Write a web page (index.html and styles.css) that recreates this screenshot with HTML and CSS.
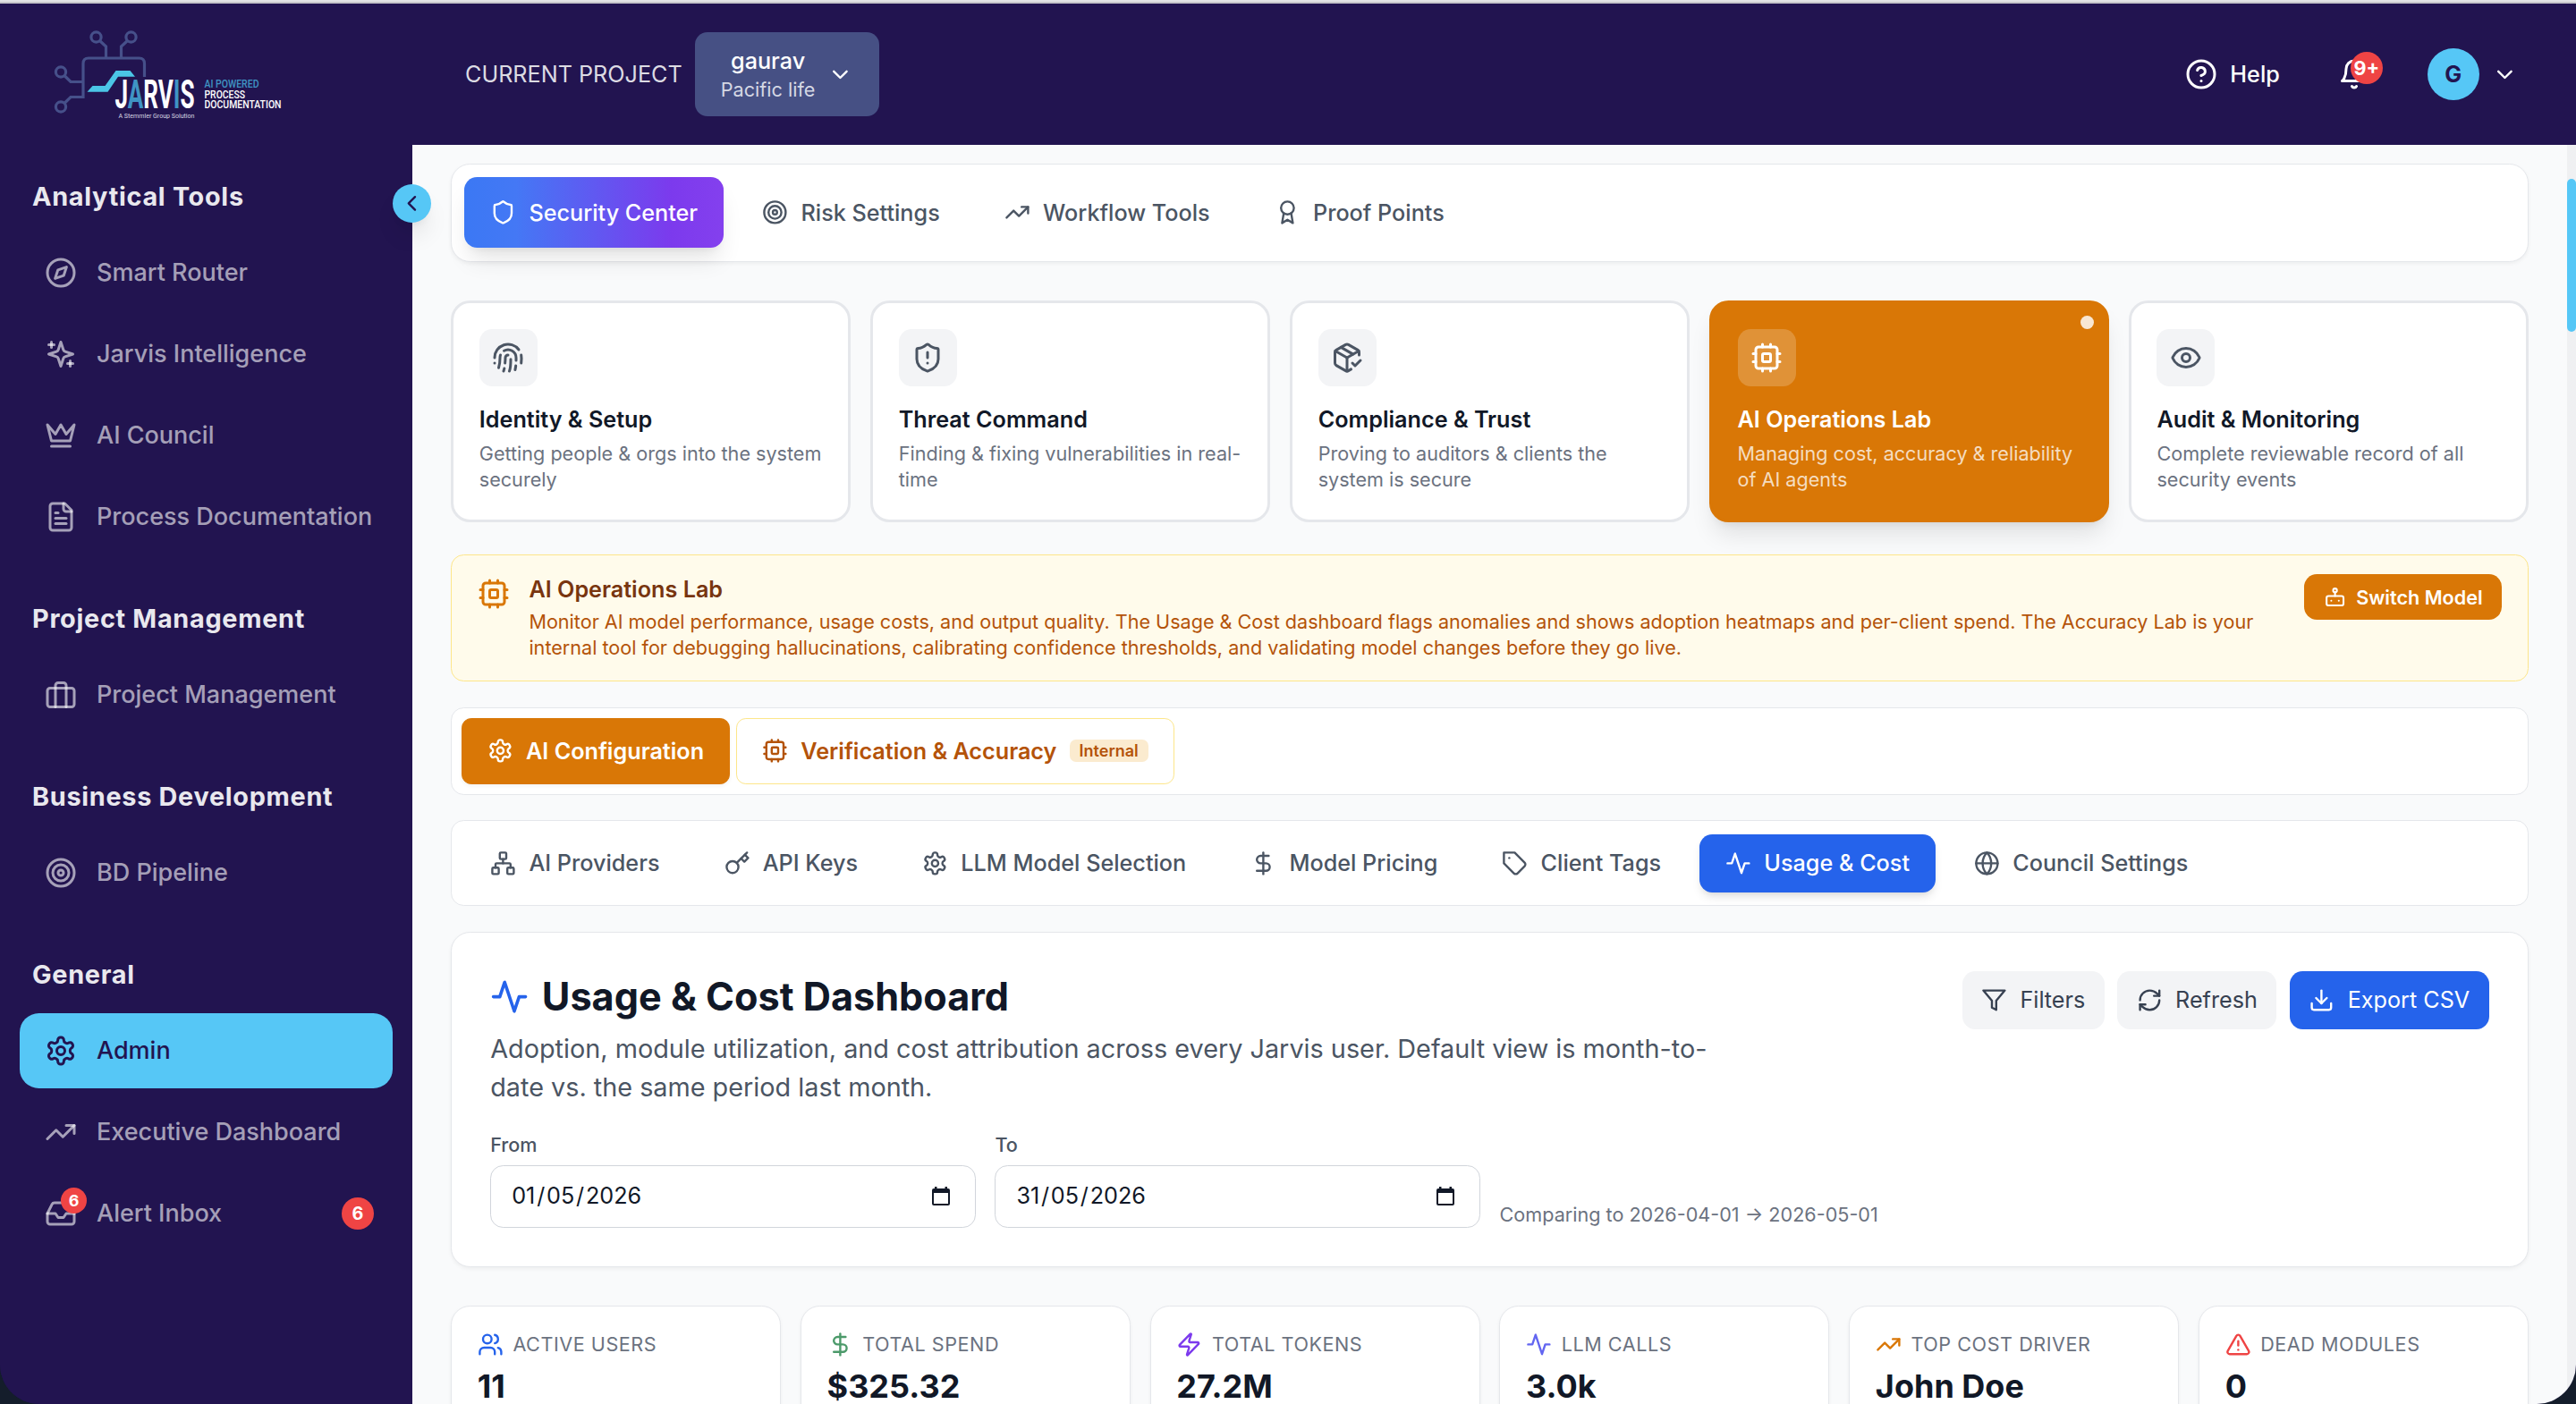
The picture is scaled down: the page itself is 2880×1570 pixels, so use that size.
FILE: index.html
```html
<!DOCTYPE html>
<html lang="en">
<head>
<meta charset="utf-8">
<title>Jarvis – Usage &amp; Cost Dashboard</title>
<link rel="stylesheet" href="styles.css">
</head>
<body>
<svg class="sprite" aria-hidden="true">
  <symbol id="compass" viewBox="0 0 24 24"><circle cx="12" cy="12" r="10"/><path d="M16.24 7.76 14.12 14.12 7.76 16.24 9.88 9.88z"/></symbol>
  <symbol id="sparkles" viewBox="0 0 24 24"><path d="m12 3-1.912 5.813a2 2 0 0 1-1.275 1.275L3 12l5.813 1.912a2 2 0 0 1 1.275 1.275L12 21l1.912-5.813a2 2 0 0 1 1.275-1.275L21 12l-5.813-1.912a2 2 0 0 1-1.275-1.275L12 3Z"/><path d="M5 3v4"/><path d="M19 17v4"/><path d="M3 5h4"/><path d="M17 19h4"/></symbol>
  <symbol id="crown" viewBox="0 0 24 24"><path d="m2 4 3 12h14l3-12-6 7-4-7-4 7-6-7zm3 16h14"/></symbol>
  <symbol id="file" viewBox="0 0 24 24"><path d="M15 2H6a2 2 0 0 0-2 2v16a2 2 0 0 0 2 2h12a2 2 0 0 0 2-2V7Z"/><path d="M14 2v4a2 2 0 0 0 2 2h4"/><path d="M10 9H8"/><path d="M16 13H8"/><path d="M16 17H8"/></symbol>
  <symbol id="briefcase" viewBox="0 0 24 24"><rect x="2" y="7" width="20" height="14" rx="2"/><path d="M16 21V5a2 2 0 0 0-2-2h-4a2 2 0 0 0-2 2v16"/></symbol>
  <symbol id="target" viewBox="0 0 24 24"><circle cx="12" cy="12" r="10"/><circle cx="12" cy="12" r="6"/><circle cx="12" cy="12" r="2"/></symbol>
  <symbol id="settings" viewBox="0 0 24 24"><path d="M12.22 2h-.44a2 2 0 0 0-2 2v.18a2 2 0 0 1-1 1.73l-.43.25a2 2 0 0 1-2 0l-.15-.08a2 2 0 0 0-2.73.73l-.22.38a2 2 0 0 0 .73 2.73l.15.1a2 2 0 0 1 1 1.72v.51a2 2 0 0 1-1 1.74l-.15.09a2 2 0 0 0-.73 2.73l.22.38a2 2 0 0 0 2.73.73l.15-.08a2 2 0 0 1 2 0l.43.25a2 2 0 0 1 1 1.73V20a2 2 0 0 0 2 2h.44a2 2 0 0 0 2-2v-.18a2 2 0 0 1 1-1.73l.43-.25a2 2 0 0 1 2 0l.15.08a2 2 0 0 0 2.73-.73l.22-.39a2 2 0 0 0-.73-2.73l-.15-.08a2 2 0 0 1-1-1.74v-.5a2 2 0 0 1 1-1.74l.15-.09a2 2 0 0 0 .73-2.73l-.22-.38a2 2 0 0 0-2.73-.73l-.15.08a2 2 0 0 1-2 0l-.43-.25a2 2 0 0 1-1-1.73V4a2 2 0 0 0-2-2z"/><circle cx="12" cy="12" r="3"/></symbol>
  <symbol id="trending" viewBox="0 0 24 24"><path d="M22 7 13.5 15.5 8.5 10.5 2 17"/><path d="M16 7h6v6"/></symbol>
  <symbol id="inbox" viewBox="0 0 24 24"><path d="M22 12H16L14 15H10L8 12H2"/><path d="M5.45 5.11 2 12v6a2 2 0 0 0 2 2h16a2 2 0 0 0 2-2v-6l-3.45-6.89A2 2 0 0 0 16.76 4H7.24a2 2 0 0 0-1.79 1.11z"/></symbol>
  <symbol id="shield" viewBox="0 0 24 24"><path d="M20 13c0 5-3.5 7.5-7.66 8.95a1 1 0 0 1-.67-.01C7.5 20.5 4 18 4 13V6a1 1 0 0 1 1-1c2 0 4.5-1.2 6.24-2.72a1.17 1.17 0 0 1 1.52 0C14.51 3.81 17 5 19 5a1 1 0 0 1 1 1z"/></symbol>
  <symbol id="shield-alert" viewBox="0 0 24 24"><path d="M20 13c0 5-3.5 7.5-7.66 8.95a1 1 0 0 1-.67-.01C7.5 20.5 4 18 4 13V6a1 1 0 0 1 1-1c2 0 4.5-1.2 6.24-2.72a1.17 1.17 0 0 1 1.52 0C14.51 3.81 17 5 19 5a1 1 0 0 1 1 1z"/><path d="M12 8v4"/><path d="M12 16h.01"/></symbol>
  <symbol id="award" viewBox="0 0 24 24"><circle cx="12" cy="8" r="6"/><path d="M15.477 12.89 17 22l-5-3-5 3 1.523-9.11"/></symbol>
  <symbol id="fingerprint" viewBox="0 0 24 24"><path d="M12 10a2 2 0 0 0-2 2c0 1.02-.1 2.51-.26 4"/><path d="M14 13.12c0 2.38 0 6.38-1 8.88"/><path d="M17.29 21.02c.12-.6.43-2.3.5-3.02"/><path d="M2 12a10 10 0 0 1 18-6"/><path d="M2 16h.01"/><path d="M21.8 16c.2-2 .131-5.354 0-6"/><path d="M5 19.5C5.5 18 6 15 6 12a6 6 0 0 1 .34-2"/><path d="M8.65 22c.21-.66.45-1.32.57-2"/><path d="M9 6.8a6 6 0 0 1 9 5.2v2"/></symbol>
  <symbol id="package" viewBox="0 0 24 24"><path d="m16 16 2 2 4-4"/><path d="M21 10V8a2 2 0 0 0-1-1.73l-7-4a2 2 0 0 0-2 0l-7 4A2 2 0 0 0 3 8v8a2 2 0 0 0 1 1.73l7 4a2 2 0 0 0 2 0l2-1.14"/><path d="m7.5 4.27 9 5.15"/><path d="M3.29 7 12 12 20.71 7"/><path d="M12 22V12"/></symbol>
  <symbol id="cpu" viewBox="0 0 24 24"><rect x="4" y="4" width="16" height="16" rx="2"/><rect x="9" y="9" width="6" height="6" rx="1"/><path d="M15 2v2M15 20v2M2 15h2M2 9h2M20 15h2M20 9h2M9 2v2M9 20v2"/></symbol>
  <symbol id="eye" viewBox="0 0 24 24"><path d="M2.062 12.348a1 1 0 0 1 0-.696 10.75 10.75 0 0 1 19.876 0 1 1 0 0 1 0 .696 10.75 10.75 0 0 1-19.876 0"/><circle cx="12" cy="12" r="3"/></symbol>
  <symbol id="bot" viewBox="0 0 24 24"><rect x="3" y="11" width="18" height="10" rx="2"/><circle cx="12" cy="5" r="2"/><path d="M12 7v4"/><path d="M8 16h.01"/><path d="M16 16h.01"/></symbol>
  <symbol id="network" viewBox="0 0 24 24"><rect x="16" y="16" width="6" height="6" rx="1"/><rect x="2" y="16" width="6" height="6" rx="1"/><rect x="9" y="2" width="6" height="6" rx="1"/><path d="M5 16v-3a1 1 0 0 1 1-1h12a1 1 0 0 1 1 1v3"/><path d="M12 12V8"/></symbol>
  <symbol id="key" viewBox="0 0 24 24"><circle cx="7.5" cy="15.5" r="5.5"/><path d="m21 2-9.6 9.6"/><path d="m15.5 7.5 3 3L22 7l-3-3"/></symbol>
  <symbol id="dollar" viewBox="0 0 24 24"><path d="M12 2v20"/><path d="M17 5H9.5a3.5 3.5 0 0 0 0 7h5a3.5 3.5 0 0 1 0 7H6"/></symbol>
  <symbol id="tag" viewBox="0 0 24 24"><path d="M12 2H2v10l9.29 9.29c.94.94 2.48.94 3.42 0l6.58-6.58c.94-.94.94-2.48 0-3.42L12 2Z"/><path d="M7 7h.01"/></symbol>
  <symbol id="activity" viewBox="0 0 24 24"><path d="M22 12h-4l-3 9L9 3l-3 9H2"/></symbol>
  <symbol id="globe" viewBox="0 0 24 24"><circle cx="12" cy="12" r="10"/><path d="M12 2a14.5 14.5 0 0 0 0 20 14.5 14.5 0 0 0 0-20"/><path d="M2 12h20"/></symbol>
  <symbol id="filter" viewBox="0 0 24 24"><path d="M22 3H2l8 9.46V19l4 2v-8.54z"/></symbol>
  <symbol id="refresh" viewBox="0 0 24 24"><path d="M3 12a9 9 0 0 1 9-9 9.75 9.75 0 0 1 6.74 2.74L21 8"/><path d="M21 3v5h-5"/><path d="M21 12a9 9 0 0 1-9 9 9.75 9.75 0 0 1-6.74-2.74L3 16"/><path d="M8 16H3v5"/></symbol>
  <symbol id="download" viewBox="0 0 24 24"><path d="M21 15v4a2 2 0 0 1-2 2H5a2 2 0 0 1-2-2v-4"/><path d="m7 10 5 5 5-5"/><path d="M12 15V3"/></symbol>
  <symbol id="users" viewBox="0 0 24 24"><path d="M16 21v-2a4 4 0 0 0-4-4H6a4 4 0 0 0-4 4v2"/><circle cx="9" cy="7" r="4"/><path d="M22 21v-2a4 4 0 0 0-3-3.87"/><path d="M16 3.13a4 4 0 0 1 0 7.75"/></symbol>
  <symbol id="zap" viewBox="0 0 24 24"><path d="M4 14a1 1 0 0 1-.78-1.63l9.9-10.2a.5.5 0 0 1 .86.46l-1.92 6.02A1 1 0 0 0 13 10h7a1 1 0 0 1 .78 1.63l-9.9 10.2a.5.5 0 0 1-.86-.46l1.92-6.02A1 1 0 0 0 11 14z"/></symbol>
  <symbol id="alert" viewBox="0 0 24 24"><path d="m21.73 18-8-14a2 2 0 0 0-3.48 0l-8 14A2 2 0 0 0 4 21h16a2 2 0 0 0 1.73-3"/><path d="M12 9v4"/><path d="M12 17h.01"/></symbol>
  <symbol id="help" viewBox="0 0 24 24"><circle cx="12" cy="12" r="10"/><path d="M9.09 9a3 3 0 0 1 5.83 1c0 2-3 3-3 3"/><path d="M12 17h.01"/></symbol>
  <symbol id="bell" viewBox="0 0 24 24"><path d="M6 8a6 6 0 0 1 12 0c0 7 3 9 3 9H3s3-2 3-9"/><path d="M10.3 21a1.94 1.94 0 0 0 3.4 0"/></symbol>
  <symbol id="chev-down" viewBox="0 0 24 24"><path d="m6 9 6 6 6-6"/></symbol>
  <symbol id="chev-left" viewBox="0 0 24 24"><path d="m15 18-6-6 6-6"/></symbol>
  <symbol id="calendar" viewBox="0 0 20 22"><path class="solid" fill-rule="evenodd" d="M3 0h2.5v2h9V0H17v2h1a2 2 0 0 1 2 2v15a2 2 0 0 1-2 2H2a2 2 0 0 1-2-2V4a2 2 0 0 1 2-2h1zM2 7v12h16V7z"/></symbol>
</svg>

<div class="window">
  <header class="topbar">
    <svg class="logo" viewBox="0 0 300 125" role="img" aria-label="Jarvis">
      <g class="logo-circuit">
        <circle cx="67.5" cy="20.5" r="5.6"/><circle cx="106.5" cy="20.5" r="5.6"/>
        <circle cx="28" cy="59.5" r="5.6"/><circle cx="28" cy="98.5" r="5.6"/>
        <path d="M71.5 24.5 78.5 31V44M102.500 24.500 95.500 31V44M32 63.500 39 70.500H53M32 94.500 39 87.500H53M53 89V50Q53 44 59 44H115.500Q121.500 44 121.500 50V65"/>
      </g>
      <path class="logo-swoosh" d="M57.500 81.800 63.500 75H77.500L89.500 58H105.500L111 64.800H92L80.500 81.800Z"/>
      <text class="logo-name" x="88.500" y="100" textLength="89" lengthAdjust="spacingAndGlyphs">J<tspan class="logo-blue">A</tspan>RV<tspan class="logo-blue">I</tspan>S</text>
      <text class="logo-tag logo-blue" x="188.500" y="77.300" textLength="61" lengthAdjust="spacingAndGlyphs">AI POWERED</text>
      <text class="logo-tag" x="188.500" y="88.600" textLength="45.500" lengthAdjust="spacingAndGlyphs">PROCESS</text>
      <text class="logo-tag" x="188.500" y="100" textLength="86" lengthAdjust="spacingAndGlyphs">DOCUMENTATION</text>
      <text class="logo-sub" x="92.500" y="111" textLength="85" lengthAdjust="spacingAndGlyphs">A Stemmler Group Solution</text>
    </svg>
    <span class="project-label">CURRENT PROJECT</span>
    <button class="project-select">
      <span class="project-names"><strong>gaurav</strong><small>Pacific life</small></span>
      <svg class="icon i16"><use href="#chev-down"/></svg>
    </button>
    <div class="account">
      <a class="help"><svg class="icon i20"><use href="#help"/></svg>Help</a>
      <span class="bell"><svg class="icon i20"><use href="#bell"/></svg><b class="bell-count">9+</b></span>
      <span class="profile"><span class="avatar">G</span><svg class="icon i16"><use href="#chev-down"/></svg></span>
    </div>
  </header>

  <div class="body">
    <aside class="sidebar">
      <button class="collapse"><svg class="icon i16"><use href="#chev-left"/></svg></button>
      <section class="nav-group">
        <h2>Analytical Tools</h2>
        <a class="nav-item"><svg class="icon i20"><use href="#compass"/></svg>Smart Router</a>
        <a class="nav-item"><svg class="icon i20"><use href="#sparkles"/></svg>Jarvis Intelligence</a>
        <a class="nav-item"><svg class="icon i20"><use href="#crown"/></svg>AI Council</a>
        <a class="nav-item"><svg class="icon i20"><use href="#file"/></svg>Process Documentation</a>
      </section>
      <section class="nav-group">
        <h2>Project Management</h2>
        <a class="nav-item"><svg class="icon i20"><use href="#briefcase"/></svg>Project Management</a>
      </section>
      <section class="nav-group">
        <h2>Business Development</h2>
        <a class="nav-item"><svg class="icon i20"><use href="#target"/></svg>BD Pipeline</a>
      </section>
      <section class="nav-group">
        <h2>General</h2>
        <a class="nav-item active"><svg class="icon i20"><use href="#settings"/></svg>Admin</a>
        <a class="nav-item"><svg class="icon i20"><use href="#trending"/></svg>Executive Dashboard</a>
        <a class="nav-item"><span class="inbox-icon"><svg class="icon i20"><use href="#inbox"/></svg><b>6</b></span>Alert Inbox<b class="count">6</b></a>
      </section>
    </aside>

    <main class="content">
      <nav class="panel main-tabs">
        <a class="tab gradient"><svg class="icon i16"><use href="#shield"/></svg>Security Center</a>
        <a class="tab"><svg class="icon i16"><use href="#target"/></svg>Risk Settings</a>
        <a class="tab"><svg class="icon i16"><use href="#trending"/></svg>Workflow Tools</a>
        <a class="tab"><svg class="icon i16"><use href="#award"/></svg>Proof Points</a>
      </nav>

      <div class="areas">
        <article class="area"><span class="area-icon"><svg class="icon i20"><use href="#fingerprint"/></svg></span><h3>Identity &amp; Setup</h3><p>Getting people &amp; orgs into the system securely</p></article>
        <article class="area"><span class="area-icon"><svg class="icon i20"><use href="#shield-alert"/></svg></span><h3>Threat Command</h3><p>Finding &amp; fixing vulnerabilities in real-time</p></article>
        <article class="area"><span class="area-icon"><svg class="icon i20"><use href="#package"/></svg></span><h3>Compliance &amp; Trust</h3><p>Proving to auditors &amp; clients the system is secure</p></article>
        <article class="area selected"><i class="area-dot"></i><span class="area-icon"><svg class="icon i20"><use href="#cpu"/></svg></span><h3>AI Operations Lab</h3><p>Managing cost, accuracy &amp; reliability of AI agents</p></article>
        <article class="area"><span class="area-icon"><svg class="icon i20"><use href="#eye"/></svg></span><h3>Audit &amp; Monitoring</h3><p>Complete reviewable record of all security events</p></article>
      </div>

      <section class="banner">
        <svg class="icon i20"><use href="#cpu"/></svg>
        <div class="banner-text">
          <h3>AI Operations Lab</h3>
          <p>Monitor AI model performance, usage costs, and output quality. The Usage &amp; Cost dashboard flags anomalies and shows adoption heatmaps and per-client spend. The Accuracy Lab is your internal tool for debugging hallucinations, calibrating confidence thresholds, and validating model changes before they go live.</p>
        </div>
        <button class="switch"><svg class="icon i14"><use href="#bot"/></svg>Switch Model</button>
      </section>

      <nav class="panel lab-tabs">
        <a class="lab-tab on"><svg class="icon i16"><use href="#settings"/></svg>AI Configuration</a>
        <a class="lab-tab"><svg class="icon i16"><use href="#cpu"/></svg>Verification &amp; Accuracy<em>Internal</em></a>
      </nav>

      <nav class="panel config-tabs">
        <a class="tab"><svg class="icon i16"><use href="#network"/></svg>AI Providers</a>
        <a class="tab"><svg class="icon i16"><use href="#key"/></svg>API Keys</a>
        <a class="tab"><svg class="icon i16"><use href="#settings"/></svg>LLM Model Selection</a>
        <a class="tab"><svg class="icon i16"><use href="#dollar"/></svg>Model Pricing</a>
        <a class="tab"><svg class="icon i16"><use href="#tag"/></svg>Client Tags</a>
        <a class="tab blue"><svg class="icon i16"><use href="#activity"/></svg>Usage &amp; Cost</a>
        <a class="tab"><svg class="icon i16"><use href="#globe"/></svg>Council Settings</a>
      </nav>

      <section class="panel dashboard">
        <div class="dash-head">
          <div class="dash-title">
            <h1><svg class="icon i24"><use href="#activity"/></svg>Usage &amp; Cost Dashboard</h1>
            <p>Adoption, module utilization, and cost attribution across every Jarvis user. Default view is month-to-date vs. the same period last month.</p>
          </div>
          <div class="actions">
            <button class="btn"><svg class="icon i16"><use href="#filter"/></svg>Filters</button>
            <button class="btn"><svg class="icon i16"><use href="#refresh"/></svg>Refresh</button>
            <button class="btn primary"><svg class="icon i16"><use href="#download"/></svg>Export CSV</button>
          </div>
        </div>
        <div class="range">
          <label class="field">From<span class="date"><span>01<i>/</i>05<i>/</i>2026</span><svg class="cal"><use href="#calendar"/></svg></span></label>
          <label class="field">To<span class="date"><span>31<i>/</i>05<i>/</i>2026</span><svg class="cal"><use href="#calendar"/></svg></span></label>
          <span class="compare">Comparing to 2026-04-01 → 2026-05-01</span>
        </div>
      </section>

      <div class="stats">
        <article class="panel stat"><h4><svg class="icon i16 c-blue"><use href="#users"/></svg>Active Users</h4><strong>11</strong></article>
        <article class="panel stat"><h4><svg class="icon i16 c-green"><use href="#dollar"/></svg>Total Spend</h4><strong>$325.32</strong></article>
        <article class="panel stat"><h4><svg class="icon i16 c-violet"><use href="#zap"/></svg>Total Tokens</h4><strong>27.2M</strong></article>
        <article class="panel stat"><h4><svg class="icon i16 c-indigo"><use href="#activity"/></svg>LLM Calls</h4><strong>3.0k</strong></article>
        <article class="panel stat"><h4><svg class="icon i16 c-amber"><use href="#trending"/></svg>Top Cost Driver</h4><strong>John Doe</strong></article>
        <article class="panel stat"><h4><svg class="icon i16 c-red"><use href="#alert"/></svg>Dead Modules</h4><strong>0</strong></article>
      </div>
    </main>
    <div class="scrollbar"><i class="thumb"></i></div>
  </div>
</div>
</body>
</html>
```
FILE: styles.css
```css
:root {
  --navy: #221450;
  --sky: #56c7f6;
  --amber: #d97706;
  --blue: #2563eb;
  --line: #e5e7eb;
  --ink: #111827;
}
* { box-sizing: border-box; }
html, body { height: 100%; }
body {
  margin: 0;
  overflow: hidden;
  background: #141d2b;
  font-family: Inter, "Liberation Sans", sans-serif;
  font-size: 25.2px;
  line-height: 36px;
  color: var(--ink);
}
h1, h2, h3, h4, p { margin: 0; }
button { border: 0; font: inherit; color: inherit; }
.sprite { position: absolute; width: 0; height: 0; }
.icon {
  flex: none;
  fill: none;
  stroke: currentColor;
  stroke-width: 2;
  stroke-linecap: round;
  stroke-linejoin: round;
}
.i14 { width: 25.2px; height: 25.2px; }
.i16 { width: 28.8px; height: 28.8px; }
.i20 { width: 36px; height: 36px; }
.i24 { width: 43.2px; height: 43.2px; }

.window {
  display: flex;
  flex-direction: column;
  height: 1570px;
  overflow: hidden;
  border-top: 2px solid #e3e3e5;
  border-radius: 0 0 44px 44px;
  background: var(--navy);
}

/* Header */
.topbar {
  display: flex;
  align-items: center;
  flex: none;
  height: 160px;
  padding: 0 65px 0 40px;
  border-top: 2px solid #c6c5ca;
  background: var(--navy);
  color: #fff;
}
.logo { width: 300px; height: 125px; margin-right: 180px; }
.logo-circuit { fill: none; stroke: #46508a; stroke-width: 3.2; }
.logo-swoosh { fill: #4bc5e6; }
.logo-name { font: 700 45px Roboto, sans-serif; fill: #fff; }
.logo-tag { font: 500 12.4px Roboto, sans-serif; fill: #fff; }
.logo-sub { font: 400 7.6px Roboto, sans-serif; fill: #d8d6e2; }
.logo-name .logo-blue, .logo-blue { fill: #3f94c4; }
.project-label { width: 257px; color: #dcdbe3; white-space: nowrap; }
.project-select {
  display: flex;
  align-items: center;
  justify-content: center;
  gap: 14px;
  width: 206px;
  height: 94px;
  padding: 0;
  border-radius: 14px;
  background: #465084;
  color: #fff;
}
.project-names { display: flex; flex-direction: column; align-items: center; padding-top: 1px; }
.project-names strong { font-weight: 500; line-height: 33px; }
.project-names small { font-size: 21.6px; line-height: 31px; color: #d5d8e4; }
.account { display: flex; align-items: center; margin-left: auto; }
.help { display: flex; align-items: center; gap: 14.4px; margin-right: 65px; font-weight: 500; }
.bell { position: relative; display: flex; margin-right: 64px; }
.bell-count {
  position: absolute;
  top: -7px;
  left: 14px;
  width: 36px;
  height: 36px;
  border-radius: 50%;
  background: #ef4444;
  font-size: 21.6px;
  font-weight: 700;
  text-align: center;
}
.profile { display: flex; align-items: center; gap: 14.4px; }
.avatar {
  width: 58px;
  height: 58px;
  border-radius: 50%;
  background: var(--sky);
  color: var(--navy);
  font-weight: 700;
  line-height: 58px;
  text-align: center;
}

/* Sidebar */
.body { display: flex; flex: 1; min-height: 0; }
.sidebar {
  position: relative;
  z-index: 1;
  flex: none;
  width: 461px;
  padding: 36px 22px 0;
  background: var(--navy);
}
.collapse {
  position: absolute;
  top: 44px;
  right: -21px;
  display: flex;
  align-items: center;
  justify-content: center;
  width: 43px;
  height: 43px;
  padding: 0;
  border-radius: 50%;
  background: var(--sky);
  color: var(--navy);
  box-shadow: 0 18px 27px -5px rgba(0, 0, 0, .1), 0 7px 11px -7px rgba(0, 0, 0, .1);
}
.nav-group { display: flex; flex-direction: column; gap: 7px; margin-bottom: 50px; }
.nav-group h2 {
  margin-bottom: 15px;
  padding-left: 14px;
  font-size: 28.8px;
  font-weight: 700;
  line-height: 43px;
  letter-spacing: .72px;
  color: #e9e8ee;
}
.nav-item {
  display: flex;
  align-items: center;
  gap: 22px;
  height: 84px;
  padding: 0 21px 0 28px;
  border-radius: 21.6px;
  font-size: 27px;
  font-weight: 500;
  color: rgba(255, 255, 255, .6);
}
.nav-item.active { background: var(--sky); color: var(--navy); }
.inbox-icon { position: relative; display: flex; }
.inbox-icon b, .count {
  border-radius: 50%;
  background: #ef4444;
  color: #fff;
  font-weight: 700;
  text-align: center;
}
.inbox-icon b { position: absolute; top: -11px; right: -11px; width: 29px; height: 29px; font-size: 18px; line-height: 29px; }
.count { width: 36px; height: 36px; margin-left: auto; font-size: 19.8px; }

/* Content */
.content {
  display: flex;
  flex-direction: column;
  flex: 1;
  min-width: 0;
  padding: 21px 43px 0;
  background: #f9fafb;
}
.panel { flex: none; border: 1px solid var(--line); border-radius: 14.4px; background: #fff; }
.tab {
  display: flex;
  align-items: center;
  gap: 14.4px;
  padding: 0 28.8px;
  border-radius: 14.4px;
  font-weight: 500;
  color: #4b5563;
}
.main-tabs {
  display: flex;
  gap: 14.6px;
  height: 110px;
  margin-bottom: 43px;
  padding: 14.4px;
  border-radius: 21.6px;
  box-shadow: 0 2px 4px rgba(0, 0, 0, .05);
}
.main-tabs .tab { height: 79px; }
.tab.gradient {
  background: linear-gradient(90deg, #3b78f4 0%, #4478f5 20%, #7c3aed 80%, #8440ee 100%);
  color: #fff;
  box-shadow: 0 18px 27px -5px rgba(0, 0, 0, .1), 0 7px 11px -7px rgba(0, 0, 0, .1);
}
.areas { display: grid; grid-template-columns: repeat(5, 1fr); gap: 21.6px; margin-bottom: 36px; }
.area {
  position: relative;
  height: 248px;
  padding: 28.8px;
  border: 3px solid var(--line);
  border-radius: 21.6px;
  background: #fff;
}
.area-icon {
  display: flex;
  align-items: center;
  justify-content: center;
  width: 65px;
  height: 64px;
  margin-bottom: 19px;
  border-radius: 14.4px;
  background: #f3f4f6;
  color: #4b5563;
}
.area h3 { margin-bottom: 6px; font-size: 25.2px; font-weight: 600; line-height: 36px; }
.area p { font-size: 21.6px; line-height: 29px; color: #6b7280; }
.area.selected {
  border-color: var(--amber);
  background: var(--amber);
  color: #fff;
  box-shadow: 0 18px 27px -5px rgba(0, 0, 0, .1), 0 7px 11px -7px rgba(0, 0, 0, .1);
}
.selected .area-icon { background: rgba(255, 255, 255, .2); color: #fff; }
.selected p { color: rgba(255, 255, 255, .75); }
.area-dot {
  position: absolute;
  top: 14px;
  right: 14px;
  width: 15px;
  height: 15px;
  border-radius: 50%;
  background: rgba(255, 255, 255, .82);
}

.banner {
  display: flex;
  align-items: flex-start;
  flex: none;
  height: 142px;
  margin-bottom: 29px;
  padding: 21px 28.8px;
  border: 1px solid #fde68a;
  border-radius: 14.4px;
  background: #fffbeb;
  color: #b45309;
}
.banner > .icon { margin: 4px 21.6px 0 0; color: var(--amber); }
.banner-text { flex: 1; margin-right: 20px; }
.banner h3 { margin-bottom: 4px; font-size: 25.2px; font-weight: 600; line-height: 35px; color: #78350f; }
.banner p { font-size: 21.6px; line-height: 29px; }
.switch {
  display: flex;
  align-items: center;
  gap: 11.4px;
  height: 51px;
  padding: 0 21.6px;
  border-radius: 14.4px;
  background: var(--amber);
  color: #fff;
  font-size: 21.6px;
  font-weight: 600;
}
.lab-tabs { display: flex; gap: 7px; height: 98px; margin-bottom: 28px; padding: 10.8px; }
.lab-tab {
  display: flex;
  align-items: center;
  gap: 14.4px;
  height: 74px;
  padding: 0 28px;
  border: 1px solid #fde68a;
  border-radius: 10.8px;
  font-weight: 600;
  color: #b45309;
}
.lab-tab.on { border-color: var(--amber); background: var(--amber); color: #fff; box-shadow: 0 2px 4px rgba(0, 0, 0, .05); }
.lab-tab em {
  padding: 0 10.8px;
  border-radius: 7px;
  background: #fbebcf;
  font-size: 18px;
  font-style: normal;
  line-height: 25px;
}
.config-tabs { display: flex; gap: 14.5px; height: 96px; margin-bottom: 29px; padding: 15px 14.4px; }
.config-tabs .tab { height: 65px; padding-bottom: 1px; }
.tab.blue {
  background: var(--blue);
  color: #fff;
  box-shadow: 0 7px 11px -2px rgba(0, 0, 0, .1), 0 4px 7px -4px rgba(0, 0, 0, .1);
}

.dashboard {
  height: 375px;
  margin-bottom: 43px;
  padding: 43.2px;
  border-radius: 21.6px;
  box-shadow: 0 2px 4px rgba(0, 0, 0, .05);
}
.dash-head { display: flex; justify-content: space-between; margin-bottom: 28px; }
.dash-title { width: 1382px; }
.dash-title h1 { display: flex; align-items: center; gap: 14.4px; font-size: 43.2px; font-weight: 700; line-height: 57px; }
.dash-title h1 .icon { color: var(--blue); }
.dash-title p { margin-top: 8px; font-size: 28.8px; line-height: 43.2px; color: #4b5563; }
.actions { display: flex; gap: 14.4px; }
.btn {
  display: flex;
  align-items: center;
  gap: 14.4px;
  height: 65px;
  padding: 0 21.6px 1px;
  border-radius: 14.4px;
  background: #f3f4f6;
  font-weight: 400;
  color: #374151;
}
.btn.primary { background: var(--blue); color: #fff; }
.range { display: flex; align-items: flex-end; gap: 21.6px; }
.field { width: 542.6px; font-size: 21.6px; font-weight: 500; line-height: 29px; color: #4b5563; }
.date {
  display: flex;
  align-items: center;
  justify-content: space-between;
  height: 70px;
  margin-top: 8px;
  padding: 0 28px 0 23px;
  border: 1px solid #d1d5db;
  border-radius: 14.4px;
  font-size: 25.2px;
  font-weight: 400;
  color: var(--ink);
}
.date i { margin: 0 1.8px; font-style: normal; }
.cal { width: 20px; height: 22px; }
.solid { fill: var(--ink); }
.compare { font-size: 21.6px; line-height: 29px; color: #6b7280; }

.stats { display: grid; grid-template-columns: repeat(6, 1fr); gap: 21.6px; }
.stat { height: 200px; padding: 27.8px 28.8px; border-radius: 21.6px; box-shadow: 0 2px 4px rgba(0, 0, 0, .05); }
.stat h4 {
  display: flex;
  align-items: center;
  gap: 10.8px;
  font-size: 21.6px;
  font-weight: 400;
  line-height: 29px;
  letter-spacing: .54px;
  text-transform: uppercase;
  color: #6b7280;
}
.stat strong { display: block; margin-top: 7px; font-size: 36px; font-weight: 700; line-height: 50px; }
.c-blue { color: #2563eb; }
.c-green { color: #4c9a6a; }
.c-violet { color: #7c3aed; }
.c-indigo { color: #6366f1; }
.c-amber { color: #d97706; }
.c-red { color: #ef4444; }

.scrollbar { flex: none; width: 10px; padding-top: 38px; background: #eff0f2; }
.thumb { display: block; height: 171px; border-radius: 5px; background: var(--sky); }
```
